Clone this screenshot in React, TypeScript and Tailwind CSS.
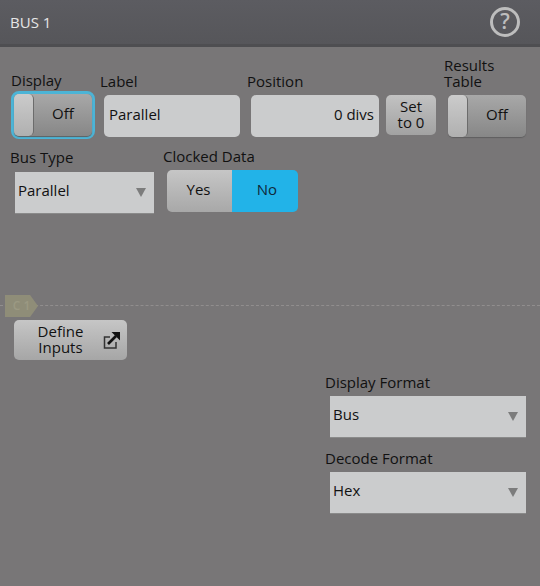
function Field({ label, className, children }: { label: string; className?: string; children: React.ReactNode }) {
  return (
    <div className={className}>
      <div className="text-[15px] leading-[16px] text-[#111] whitespace-pre-line">{label}</div>
      {children}
    </div>
  );
}

function Toggle() {
  return (
    <div className="flex h-[42px] w-[78px] rounded-[5px] bg-gradient-to-b from-[#a8a8a8] to-[#878787] shadow-[0_1px_1px_#5f5f5f]">
      <div className="h-full w-[20px] rounded-[5px] bg-gradient-to-b from-[#cbcbcb] to-[#b0b0b0] border-r border-[#6c6c6c]" />
      <div className="flex flex-1 items-center justify-center pb-[4px] text-[15px] text-[#111]">Off</div>
    </div>
  );
}

function Select({ value, className }: { value: string; className: string }) {
  return (
    <div className={`flex items-center justify-between bg-[#cbcccd] pl-[3px] pr-[8px] text-[15px] text-[#111] border-b border-[#8a8a8a] ${className}`}>
      <span className="pb-[4px]">{value}</span>
      <svg width="10" height="9" viewBox="0 0 10 9"><path d="M0 0h10L5 9z" fill="#7c7c7c" /></svg>
    </div>
  );
}

export default function App() {
  return (
    <div className="h-[586px] w-[540px] overflow-hidden bg-[#787677] font-['Open_Sans',sans-serif]">
      <div className="flex h-[47px] items-center justify-between bg-gradient-to-b from-[#5c5c61] to-[#56565a] border-b-[3px] border-[#4e4e51] pl-[10px] pr-[20px]">
        <span className="text-[15px] font-medium text-[#e6e6e6]">BUS 1</span>
        <div className="flex h-[30px] w-[30px] items-center justify-center rounded-full border-[3px] border-[#bdbdbd] text-[21px] font-semibold text-[#bdbdbd]">?</div>
      </div>

      {/* top row */}
      <div className="mt-[10px] flex items-end">
        <Field label="Display" className="ml-[11px] w-[89px]">
          <div className="mt-[3px] w-fit rounded-[8px] border-[3px] border-[#4cb4d6]">
            <Toggle />
          </div>
        </Field>
        <Field label="Label" className="mb-[2px] w-[147px]">
          <div className="ml-[4px] mt-[6px] flex h-[42px] w-[136px] items-center rounded-[5px] bg-[#cbcccd] pb-[4px] pl-[5px] text-[15px] text-[#111]">Parallel</div>
        </Field>
        <Field label="Position" className="mb-[2px] w-[197px]">
          <div className="mt-[6px] flex items-start pl-[4px]">
            <div className="flex h-[42px] w-[128px] items-center justify-end rounded-[5px] bg-[#cbcccd] pb-[4px] pr-[5px] text-[15px] text-[#111]">0 divs</div>
            <div className="ml-[7px] flex h-[40px] w-[50px] items-center justify-center rounded-[5px] bg-gradient-to-b from-[#c2c2c2] to-[#a2a2a2] pb-[2px] text-center text-[15px] leading-[16px] text-[#111]">Set<br />to 0</div>
          </div>
        </Field>
        <Field label={"Results\nTable"} className="mb-[2px]">
          <div className="ml-[4px] mt-[6px]"><Toggle /></div>
        </Field>
      </div>

      {/* second row */}
      <div className="mt-[9px] flex items-start">
        <Field label="Bus Type" className="ml-[10px] mt-[1px] w-[153px]">
          <Select value="Parallel" className="ml-[5px] mt-[7px] h-[42px] w-[139px]" />
        </Field>
        <Field label="Clocked Data">
          <div className="ml-[4px] mt-[6px] flex h-[42px] w-[131px] overflow-hidden rounded-[5px] text-[15px]">
            <div className="flex w-[65px] items-center justify-center bg-gradient-to-b from-[#c6c6c6] to-[#a8a8a8] pb-[3px] pr-[2px] text-[#111]">Yes</div>
            <div className="flex flex-1 items-center justify-center bg-[#22b3e8] pb-[3px] pl-[4px] text-[#10283a]">No</div>
          </div>
        </Field>
      </div>

      {/* cursor line */}
      <div className="relative mt-[91px] border-t border-dashed border-[#918e8e]">
        <div className="absolute left-[5px] top-[-11px] flex h-[22px] w-[33px] items-center justify-center bg-[#8f8d78] text-[12px] font-semibold text-[#9b9983] [clip-path:polygon(0_0,76%_0,100%_50%,76%_100%,0_100%)]">C 1</div>
      </div>

      <div className="ml-[14px] mt-[14px] flex h-[40px] w-[113px] items-center rounded-[5px] bg-gradient-to-b from-[#c6c6c6] to-[#a6a6a6] pb-[2px] pl-[14px] text-[15px] leading-[16px] text-[#111]">
        <span className="w-[65px] text-center">Define<br />Inputs</span>
        <svg className="ml-[9px] mt-[2px]" width="18" height="18" viewBox="0 0 18 18" fill="none">
          <path d="M8 6H2.5v11H14v-6" stroke="#333" strokeWidth="1.5" />
          <path d="M6 13 14 5" stroke="#111" strokeWidth="2.6" />
          <path d="M9.5 1H18v8.5z" fill="#111" />
        </svg>
      </div>

      <div className="ml-[325px] mt-[14px] w-[201px]">
        <Field label="Display Format">
          <Select value="Bus" className="ml-[5px] mt-[6px] h-[42px] w-[196px]" />
        </Field>
        <Field label="Decode Format" className="mt-[12px]">
          <Select value="Hex" className="ml-[5px] mt-[6px] h-[42px] w-[196px]" />
        </Field>
      </div>
    </div>
  );
}
